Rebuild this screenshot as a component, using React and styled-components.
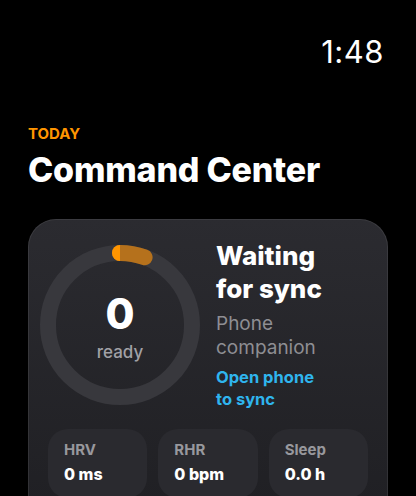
import React from 'react'
import styled, { createGlobalStyle } from 'styled-components'

const GlobalStyle = createGlobalStyle`
  html, body {
    margin: 0;
    padding: 0;
    background: #000;
  }
  body {
    font-family: Inter, "Noto Sans", sans-serif;
    color: #fff;
    -webkit-font-smoothing: antialiased;
  }
`

const Screen = styled.div`
  width: 416px;
  height: 496px;
  overflow: hidden;
  background: #000;
  display: flex;
  flex-direction: column;
  padding: 0 28px;
  box-sizing: border-box;
`

const StatusBar = styled.div`
  display: flex;
  justify-content: flex-end;
  padding-top: 32px;
  padding-right: 4px;
  height: 40px;
`

const Clock = styled.div`
  font-size: 31px;
  font-weight: 400;
  letter-spacing: 0.5px;
  line-height: 40px;
`

const Header = styled.div`
  margin-top: 53px;
  display: flex;
  flex-direction: column;
`

const Eyebrow = styled.div`
  color: #ff9500;
  font-size: 15px;
  font-weight: 700;
  line-height: 18px;
`

const Title = styled.h1`
  margin: 7px 0 0;
  font-size: 34px;
  font-weight: 800;
  line-height: 40px;
  letter-spacing: -0.2px;
`

const Card = styled.div`
  margin-top: 29px;
  border-radius: 28px;
  background: linear-gradient(180deg, #2b2b30 0%, #1f1f23 100%);
  box-shadow: inset 0 0 0 1px rgba(255, 255, 255, 0.08);
  padding: 20px 20px 30px;
  display: flex;
  flex-direction: column;
  gap: 19px;
`

const TopRow = styled.div`
  display: flex;
  align-items: center;
  gap: 16px;
`

const RingWrap = styled.div`
  position: relative;
  width: 160px;
  height: 160px;
  margin-left: -8px;
  flex-shrink: 0;
`

const RingCenter = styled.div`
  position: absolute;
  inset: 0;
  display: flex;
  flex-direction: column;
  align-items: center;
  justify-content: center;
  padding-top: 4px;
`

const BigNumber = styled.div`
  font-size: 42px;
  font-weight: 800;
  line-height: 46px;
`

const RingLabel = styled.div`
  margin-top: 4px;
  font-size: 17px;
  font-weight: 500;
  color: #a1a1a6;
  line-height: 22px;
`

const Info = styled.div`
  display: flex;
  flex-direction: column;
`

const Status = styled.div`
  font-size: 26px;
  font-weight: 800;
  line-height: 33px;
`

const Subtitle = styled.div`
  margin-top: 7px;
  font-size: 19px;
  font-weight: 400;
  color: #8e8e93;
  line-height: 24px;
`

const Action = styled.div`
  margin-top: 6px;
  font-size: 16.5px;
  font-weight: 700;
  color: #2fb5ee;
  line-height: 22px;
`

const Stats = styled.div`
  display: grid;
  grid-template-columns: repeat(3, 1fr);
  gap: 11px;
`

const Stat = styled.div`
  background: #2a2a2f;
  border-radius: 20px;
  padding: 12px 16px 14px;
  display: flex;
  flex-direction: column;
  gap: 5px;
`

const StatLabel = styled.div`
  font-size: 15px;
  font-weight: 700;
  color: #98989d;
  line-height: 18px;
`

const StatValue = styled.div`
  font-size: 16px;
  font-weight: 800;
  line-height: 20px;
`

const Ring = () => (
  <svg width="160" height="160" viewBox="0 0 160 160">
    <circle cx="80" cy="80" r="72" fill="none" stroke="#38383d" strokeWidth="16" />
    <path
      d="M 80 8 A 72 72 0 0 1 104.6 12.3"
      fill="none"
      stroke="#b5711c"
      strokeWidth="16"
      strokeLinecap="round"
    />
    <path d="M 80 0 A 8 8 0 0 0 80 16 Z" fill="#ff9500" />
  </svg>
)

const stats = [
  { label: 'HRV', value: '0 ms' },
  { label: 'RHR', value: '0 bpm' },
  { label: 'Sleep', value: '0.0 h' },
]

export default function App() {
  return (
    <>
      <GlobalStyle />
      <Screen>
        <StatusBar>
          <Clock>1:48</Clock>
        </StatusBar>
        <Header>
          <Eyebrow>TODAY</Eyebrow>
          <Title>Command Center</Title>
        </Header>
        <Card>
          <TopRow>
            <RingWrap>
              <Ring />
              <RingCenter>
                <BigNumber>0</BigNumber>
                <RingLabel>ready</RingLabel>
              </RingCenter>
            </RingWrap>
            <Info>
              <Status>Waiting<br />for sync</Status>
              <Subtitle>Phone<br />companion</Subtitle>
              <Action>Open phone<br />to sync</Action>
            </Info>
          </TopRow>
          <Stats>
            {stats.map((s) => (
              <Stat key={s.label}>
                <StatLabel>{s.label}</StatLabel>
                <StatValue>{s.value}</StatValue>
              </Stat>
            ))}
          </Stats>
        </Card>
      </Screen>
    </>
  )
}
